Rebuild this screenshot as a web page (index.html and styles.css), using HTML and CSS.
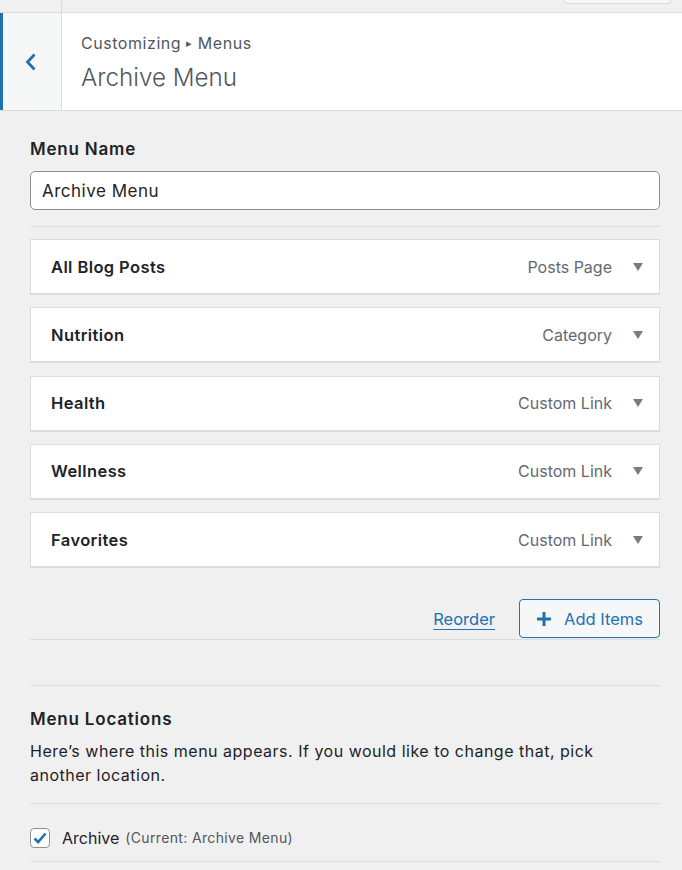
FILE: index.html
```html
<!DOCTYPE html>
<html lang="en">
<head>
<meta charset="utf-8">
<title>Archive Menu</title>
<link rel="stylesheet" href="styles.css">
</head>
<body>
<div class="topbar">
  <div class="topbar-left"></div>
  <div class="topbar-btn"></div>
</div>
<header class="header">
  <button class="back" aria-label="Back">
    <svg width="14" height="20" viewBox="0 0 14 20"><path d="M10.5 2.5 L3.5 10 L10.5 17.5" fill="none" stroke="#2271b1" stroke-width="2.8" stroke-linejoin="miter"/></svg>
  </button>
  <div class="titles">
    <div class="crumb">Customizing <span class="sep">▸</span> Menus</div>
    <h1 class="title">Archive Menu</h1>
  </div>
</header>
<main class="panel">
  <label class="label" for="mn">Menu Name</label>
  <input id="mn" class="input" type="text" value="Archive Menu">
  <div class="rule"></div>
  <ul class="items">
    <li class="item"><span class="item-title">All Blog Posts</span><span class="item-type">Posts Page</span><span class="arrow"></span></li>
    <li class="item"><span class="item-title">Nutrition</span><span class="item-type">Category</span><span class="arrow"></span></li>
    <li class="item"><span class="item-title">Health</span><span class="item-type">Custom Link</span><span class="arrow"></span></li>
    <li class="item"><span class="item-title">Wellness</span><span class="item-type">Custom Link</span><span class="arrow"></span></li>
    <li class="item"><span class="item-title">Favorites</span><span class="item-type">Custom Link</span><span class="arrow"></span></li>
  </ul>
  <div class="actions">
    <a class="reorder" href="#">Reorder</a>
    <button class="add">
      <svg width="16" height="16" viewBox="0 0 16 16"><path d="M8 1v14M1 8h14" stroke="#2271b1" stroke-width="3"/></svg>
      <span>Add Items</span>
    </button>
  </div>
  <div class="rule"></div>
  <div class="rule rule-gap"></div>
  <h2 class="label loc-title">Menu Locations</h2>
  <p class="desc">Here’s where this menu appears. If you would like to change that, pick another location.</p>
  <div class="rule"></div>
  <div class="loc-row">
    <span class="checkbox">
      <svg width="16" height="16" viewBox="0 0 16 16"><path d="M2.5 8.5 L6.2 12 L13.5 3.5" fill="none" stroke="#2271b1" stroke-width="2.6"/></svg>
    </span>
    <span class="loc-name">Archive</span>
    <span class="loc-current">(Current: Archive Menu)</span>
  </div>
  <div class="rule"></div>
</main>
</body>
</html>
```
FILE: styles.css
```css
* { box-sizing: border-box; }
body {
  margin: 0;
  background: #f0f0f0;
  font-family: Inter, "Noto Sans", "Liberation Sans", sans-serif;
  color: #1d2327;
  overflow: hidden;
}
.topbar {
  height: 13px;
  display: flex;
  justify-content: space-between;
  border-bottom: 1px solid #dcdcde;
}
.topbar-left {
  width: 62px;
  border-right: 1px solid #dcdcde;
}
.topbar-btn {
  width: 107px;
  height: 4px;
  margin-right: 11px;
  border: 1px solid #dcdcde;
  border-top: none;
  border-radius: 0 0 5px 5px;
  background: #f6f7f7;
}
.header {
  display: flex;
  height: 98px;
  background: #fff;
  border-bottom: 1px solid #dcdcde;
}
.back {
  width: 62px;
  flex: none;
  background: #f6f7f7;
  border: none;
  border-left: 3px solid #2271b1;
  border-right: 1px solid #dcdcde;
  display: flex;
  align-items: center;
  justify-content: center;
  padding: 0 3px 0 0;
}
.titles {
  padding: 20px 0 0 19px;
  color: #50575e;
}
.crumb {
  font-size: 16px;
  line-height: 20px;
  letter-spacing: 0.55px;
}
.crumb .sep {
  font-size: 11px;
  vertical-align: 2px;
}
.title {
  margin: 10px 0 0;
  font-size: 24.2px;
  font-weight: 300;
  line-height: 30px;
}
.panel {
  padding: 0 22px 0 30px;
}
.label {
  display: block;
  margin: 26px 0 0;
  font-size: 17px;
  font-weight: 600;
  line-height: 24px;
  letter-spacing: 0.8px;
}
.input {
  display: block;
  width: 100%;
  height: 39px;
  margin-top: 10px;
  padding: 0 11px;
  border: 1px solid #8c8f94;
  border-radius: 5px;
  background: #fff;
  font: inherit;
  font-size: 17px;
  letter-spacing: 0.5px;
  color: #1d2327;
}
.rule {
  height: 1px;
  background: #dcdcde;
  margin-top: 16px;
}
.items {
  list-style: none;
  margin: 12px 0 0;
  padding: 0;
  display: flex;
  flex-direction: column;
  gap: 12.3px;
}
.item {
  height: 56px;
  display: flex;
  align-items: center;
  padding: 0 16px 0 20px;
  background: #fff;
  border: 1px solid #dcdcde;
  border-bottom-width: 2px;
}
.item-title {
  flex: 1;
  font-size: 16.5px;
  font-weight: 600;
  letter-spacing: 0.4px;
}
.item-type {
  font-size: 16px;
  color: #646970;
}
.arrow {
  width: 0;
  height: 0;
  margin-left: 21px;
  border-left: 5px solid transparent;
  border-right: 5px solid transparent;
  border-top: 8px solid #787c82;
}
.actions {
  display: flex;
  justify-content: flex-end;
  align-items: center;
  gap: 24px;
  margin-top: 31px;
}
.reorder {
  color: #2271b1;
  font-size: 16.5px;
  text-decoration: underline;
  text-underline-offset: 4px;
}
.add {
  height: 39px;
  width: 141px;
  display: flex;
  align-items: center;
  gap: 12px;
  padding: 0 0 0 16px;
  border: 1px solid #2271b1;
  border-radius: 4px;
  background: #f6f7f7;
  color: #2271b1;
  font: inherit;
  font-size: 16.5px;
}
.actions + .rule { margin-top: 1px; }
.rule-gap { margin-top: 45px; }
.loc-title { margin-top: 21px; }
.desc {
  margin: 8px 0 0;
  font-size: 16px;
  line-height: 24px;
  letter-spacing: 0.5px;
  padding-right: 40px;
}
.loc-row {
  height: 57px;
  padding-top: 10px;
  display: flex;
  align-items: center;
}
.checkbox {
  width: 20px;
  height: 20px;
  border: 1px solid #8c8f94;
  border-radius: 4px;
  background: #fff;
  display: flex;
  align-items: center;
  justify-content: center;
  margin-right: 12px;
}
.loc-name {
  font-size: 16px;
  margin-right: 6px;
}
.loc-current {
  font-size: 14px;
  letter-spacing: 0.35px;
  color: #50575e;
}
.loc-row + .rule { margin-top: 0; }
```
